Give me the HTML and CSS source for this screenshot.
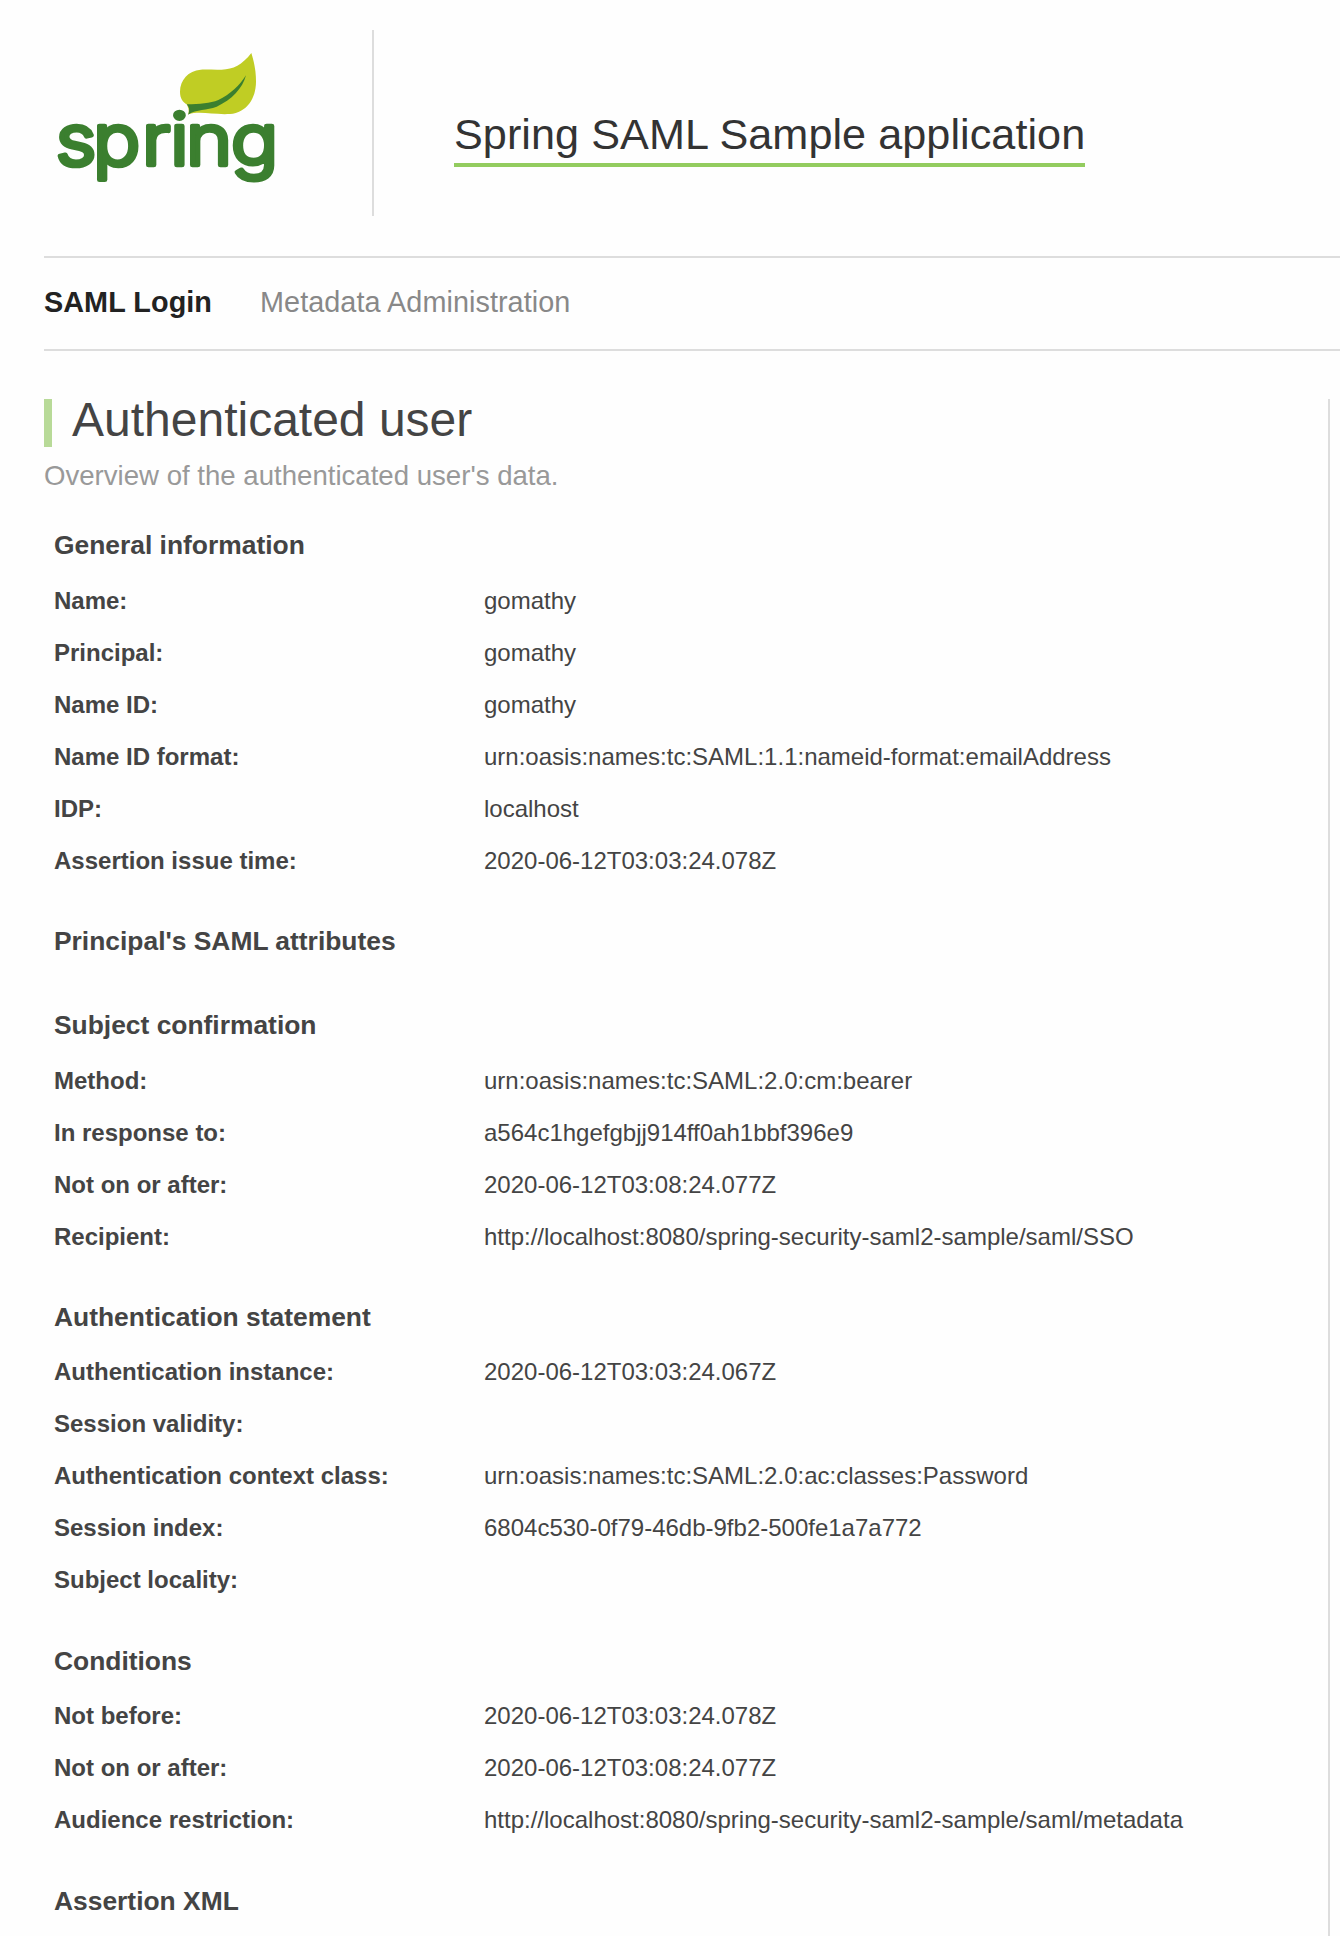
FILE: index.html
```html
<!DOCTYPE html>
<html lang="en">
<head>
<meta charset="utf-8">
<title>Spring SAML Sample application</title>
<link rel="stylesheet" href="styles.css">
</head>
<body>
<header class="header">
  <div class="brand">
    <svg class="logo" viewBox="12 30 720 480" role="img" aria-label="spring">
      <path fill="#c0cd24" d="M634 99C606 135 580 148 545 149C525 150 500 148 482 149C445 152 420 180 420 215C420 235 428 246 442 254L445 283C480 272 520 285 570 282C620 278 648 235 648 185C648 150 642 125 634 99Z"/>
      <path fill="#3b7f2f" d="M440 253C480 252 510 250 535 240C570 224 600 195 618 166C608 205 575 240 530 260C500 272 470 266 444 284C450 272 448 262 440 253Z"/>
      <circle cx="420" cy="273" r="26" fill="#fefefe"/>
      <text class="wordmark" transform="scale(1.1 1)" x="43 144.5 278 355.5 398.5 521" y="436">spring</text>
    </svg>
  </div>
  <h1 class="title">Spring SAML Sample application</h1>
</header>
<nav class="nav">
  <a class="nav-item active">SAML Login</a>
  <a class="nav-item">Metadata Administration</a>
</nav>
<main class="content">
  <h2 class="page-heading">Authenticated user</h2>
  <p class="lead">Overview of the authenticated user's data.</p>
  <section class="group">
    <h3>General information</h3>
    <dl>
      <dt>Name:</dt><dd>gomathy</dd>
      <dt>Principal:</dt><dd>gomathy</dd>
      <dt>Name ID:</dt><dd>gomathy</dd>
      <dt>Name ID format:</dt><dd>urn:oasis:names:tc:SAML:1.1:nameid-format:emailAddress</dd>
      <dt>IDP:</dt><dd>localhost</dd>
      <dt>Assertion issue time:</dt><dd>2020-06-12T03:03:24.078Z</dd>
    </dl>
  </section>
  <section class="group">
    <h3>Principal's SAML attributes</h3>
  </section>
  <section class="group">
    <h3>Subject confirmation</h3>
    <dl>
      <dt>Method:</dt><dd>urn:oasis:names:tc:SAML:2.0:cm:bearer</dd>
      <dt>In response to:</dt><dd>a564c1hgefgbjj914ff0ah1bbf396e9</dd>
      <dt>Not on or after:</dt><dd>2020-06-12T03:08:24.077Z</dd>
      <dt>Recipient:</dt><dd>http://localhost:8080/spring-security-saml2-sample/saml/SSO</dd>
    </dl>
  </section>
  <section class="group tight">
    <h3>Authentication statement</h3>
    <dl>
      <dt>Authentication instance:</dt><dd>2020-06-12T03:03:24.067Z</dd>
      <dt>Session validity:</dt><dd></dd>
      <dt>Authentication context class:</dt><dd>urn:oasis:names:tc:SAML:2.0:ac:classes:Password</dd>
      <dt>Session index:</dt><dd>6804c530-0f79-46db-9fb2-500fe1a7a772</dd>
      <dt>Subject locality:</dt><dd></dd>
    </dl>
  </section>
  <section class="group tight">
    <h3>Conditions</h3>
    <dl>
      <dt>Not before:</dt><dd>2020-06-12T03:03:24.078Z</dd>
      <dt>Not on or after:</dt><dd>2020-06-12T03:08:24.077Z</dd>
      <dt>Audience restriction:</dt><dd>http://localhost:8080/spring-security-saml2-sample/saml/metadata</dd>
    </dl>
  </section>
  <section class="group">
    <h3>Assertion XML</h3>
  </section>
</main>
</body>
</html>
```

FILE: styles.css
```css
* { box-sizing: border-box; }

body {
  margin: 0;
  height: 1936px;
  overflow: hidden;
  display: flex;
  flex-direction: column;
  padding: 30px 0 0 44px;
  background: #fefefe;
  color: #444;
  font: 24px/52px "Liberation Sans", Arial, sans-serif;
}

h1, h2, h3, p, dl, dd { margin: 0; }

.header {
  display: flex;
  flex: none;
  height: 186px;
  margin-bottom: 40px;
}

.brand {
  width: 330px;
  border-right: 2px solid #ddd;
}

.logo {
  display: block;
  width: 240px;
  height: 160px;
}

.wordmark {
  font-family: Inter, sans-serif;
  font-size: 214px;
  font-weight: 300;
  fill: #3b7f2f;
  stroke: #3b7f2f;
  stroke-width: 14px;
  stroke-linejoin: round;
}

.title {
  align-self: flex-start;
  margin: 80px 0 0 80px;
  padding-bottom: 5px;
  border-bottom: 4px solid #93cc5f;
  color: #333;
  font-size: 43.2px;
  font-weight: 400;
  line-height: 48px;
  letter-spacing: 0.05px;
}

.nav {
  display: flex;
  flex: none;
  gap: 48px;
  height: 95px;
  margin-bottom: 48px;
  border-top: 2px solid #ddd;
  border-bottom: 2px solid #ddd;
  color: #888;
  font-size: 28.8px;
  line-height: 88px;
  letter-spacing: 0.06px;
}

.active {
  color: #222;
  font-weight: 700;
}

.content {
  flex: 1;
  min-height: 0;
  margin-right: 10px;
  border-right: 2px solid #ddd;
}

.page-heading {
  height: 48px;
  padding-left: 20px;
  border-left: 8px solid #b8da98;
  font-size: 48px;
  font-weight: 400;
  line-height: 42px;
}

.lead {
  margin: 9px 0 23px;
  color: #999;
  font-size: 27.6px;
  line-height: 40px;
}

.group {
  display: flow-root;
  padding-left: 10px;
  margin-bottom: 28px;
}

.group h3 {
  margin-bottom: 4px;
  font-size: 26.4px;
  line-height: 52px;
}

.tight { margin-bottom: 29px; }
.tight h3 { margin-bottom: 3px; }

dl {
  display: grid;
  grid-template-columns: 430px 1fr;
  grid-auto-rows: 52px;
}

dt { font-weight: 700; }
```
